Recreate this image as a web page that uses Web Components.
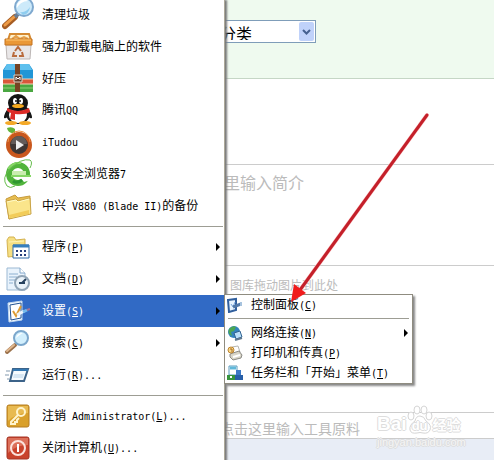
<!DOCTYPE html>
<html lang="zh-CN">
<head>
<meta charset="utf-8">
<title>开始菜单</title>
<style>
  body {
    margin: 0;
    overflow: hidden;
    background: #fff;
    font: 12px "Liberation Sans", "Noto Sans CJK SC", sans-serif;
  }
</style>
</head>
<body>

<desk-top>
  <editor-page></editor-page>

  <start-menu slot="menu">
    <menu-item label="清理垃圾">
      <svg slot="icon" viewBox="0 0 32 32">
        <path d="M13 19L3 28" stroke="#a65d24" stroke-width="6" stroke-linecap="round"/>
        <path d="M12 19L3 27" stroke="#ee9b45" stroke-width="3" stroke-linecap="round"/>
        <path d="M13 19l3-3" stroke="#6b7c91" stroke-width="4"/>
        <circle cx="22" cy="9" r="9" fill="#cdeafa" stroke="#7fa9cf" stroke-width="2"/>
        <path d="M15 10a7 7 0 0 1 11-7c-5 0-9 3-11 7z" fill="#fff"/>
        <path d="M18 14q6 1 10-5-1 7-7 8z" fill="#8fcdef"/>
      </svg>
    </menu-item>
    <menu-item label="强力卸载电脑上的软件">
      <svg slot="icon" viewBox="0 0 32 32">
        <path d="M6 10l2-6h19l2 6z" fill="#fff1cc" stroke="#d58a32" stroke-width="2"/>
        <path d="M10 9l4-3 4 3 4-2 4 2" fill="none" stroke="#e5a04a" stroke-width="2"/>
        <path d="M4 15h25l-1 14H5z" fill="#e9e7e8" stroke="#bcb6b5"/>
        <path d="M3 9h27v6H3z" fill="#ea9837" stroke="#c47320"/>
        <path d="M4 10h25" stroke="#ffc872"/>
        <path d="M13 21l3-4 3 4M20 22l1 4h-4M15 26h-4l1-4" fill="none" stroke="#b96b3d" stroke-width="2"/>
      </svg>
    </menu-item>
    <menu-item label="好压">
      <svg slot="icon" viewBox="0 0 32 32">
        <path d="M5 2h22l4 6v10H1V8z" fill="#2196d6"/>
        <path d="M5 2h22l3 6H2z" fill="#5dc0ee"/>
        <path d="M1 17h30v5H1z" fill="#d9573a"/>
        <path d="M1 22h30v8H1z" fill="#4aa741"/>
        <path d="M1 17h30M1 22h30" stroke="#f5d6b4"/>
        <path d="M1 26h30" stroke="#8ed276"/>
        <path d="M13 2h5v28h-5z" fill="#754323"/>
        <path d="M12 13h8v7h-8z" fill="#5d3b29" stroke="#ddd2c7"/>
        <path d="M14 18v-3l2 2 2-2v3" fill="none" stroke="#fff"/>
      </svg>
    </menu-item>
    <menu-item label="腾讯QQ">
      <svg slot="icon" viewBox="0 0 32 32">
        <path d="M6 15Q2 19 2 24q3 1 5-4zM26 15q4 4 4 9-3 1-5-4z" fill="#161616"/>
        <ellipse cx="16" cy="20" rx="12" ry="10" fill="#191919"/>
        <ellipse cx="16" cy="21" rx="9" ry="8" fill="#fff"/>
        <ellipse cx="16" cy="9" rx="10" ry="9" fill="#141414"/>
        <ellipse cx="13" cy="7" rx="2" ry="3" fill="#fff"/>
        <ellipse cx="19" cy="7" rx="2" ry="3" fill="#fff"/>
        <circle cx="14" cy="7" r="1" fill="#111"/>
        <circle cx="18" cy="7" r="1" fill="#111"/>
        <ellipse cx="16" cy="12" rx="6" ry="2" fill="#f7aa20"/>
        <path d="M5 14q11 6 22 0l1 4q-5 3-15 2v6l-5-1 1-6q-3-1-4-2z" fill="#dd2b27"/>
        <ellipse cx="9" cy="29" rx="6" ry="2" fill="#f4a928"/>
        <ellipse cx="23" cy="29" rx="6" ry="2" fill="#f4a928"/>
      </svg>
    </menu-item>
    <menu-item label="iTudou">
      <svg slot="icon" viewBox="0 0 32 32">
        <path d="M5 2q5-2 8 1v4Q6 8 5 2z" fill="#62b43a"/>
        <circle cx="17" cy="19" r="11" fill="#3d3634" stroke="#c9571d" stroke-width="4"/>
        <path d="M6 16a11 11 0 0 1 22 0" fill="none" stroke="#ef9345" stroke-width="1"/>
        <path d="M9 18a8 8 0 0 1 16 0z" fill="#625b59"/>
        <path d="M14 14l8 5-8 5z" fill="#eee"/>
      </svg>
    </menu-item>
    <menu-item label="360安全浏览器7">
      <svg slot="icon" viewBox="0 0 32 32">
        <circle cx="16" cy="16" r="9" fill="none" stroke="#51b43c" stroke-width="6"/>
        <path d="M10 15h14" stroke="#c9edaf" stroke-width="4"/>
        <path d="M17 18h12v4l-7 2z" fill="#fff"/>
        <path d="M9 18h20M6 11q5-7 13-6" fill="none" stroke="#86d765" stroke-width="2"/>
        <path d="M5 28Q-1 20 8 11 19 0 28 2q3 2 0 8M5 28q3 3 8 0" fill="none" stroke="#67bd4d" stroke-width="1"/>
        <path d="M11 23q4 3 9-1" fill="none" stroke="#2f9831" stroke-width="3"/>
      </svg>
    </menu-item>
    <menu-item label="中兴 V880 (Blade II)的备份">
      <svg slot="icon" viewBox="0 0 32 32">
        <path d="M4 9l9-4 3 3 12-2v15L7 29z" fill="#e7bd50" stroke="#c69b3d"/>
        <path d="M4 11l10-2 2 2 12-3 1 16-22 5z" fill="#fae58b" stroke="#c9a346"/>
        <path d="M5 12l9-2 2 2 11-3" fill="none" stroke="#fffac7"/>
        <path d="M7 25l20-5v4L8 28z" fill="#f2cc59"/>
      </svg>
    </menu-item>

    <menu-line></menu-line>

    <menu-item label="程序(&amp;P)" more>
      <svg slot="icon" viewBox="0 0 32 32">
        <path d="M5 9l2-3h5l2 3 9-1v16l-17 2z" fill="#f6df82" stroke="#d4b251"/>
        <path d="M7 11l15-1" stroke="#fff4b4"/>
        <path d="M11 14h16v13H11z" fill="#fff" stroke="#326aa5"/>
        <path d="M11 15h16" stroke="#377fbd" stroke-width="3"/>
        <path d="M14 20h2m2 0h2m2 0h2M14 24h2m2 0h2m2 0h2" stroke="#283f7b" stroke-width="2"/>
      </svg>
    </menu-item>
    <menu-item label="文档(&amp;D)" more>
      <svg slot="icon" viewBox="0 0 32 32">
        <path d="M5 5h13l5 5v17H5z" fill="#e9f3fc" stroke="#9cb9d3"/>
        <path d="M18 5v5h5" fill="#fff" stroke="#84a8cb"/>
        <path d="M7 11h9M7 14h8M7 17h6M7 20h4" stroke="#8db0d0"/>
        <circle cx="20" cy="20" r="7" fill="#e9f2f9" stroke="#91a5b7" stroke-width="2"/>
        <path d="M20 20l4-4M17 20h6" stroke="#26415e" stroke-width="2"/>
      </svg>
    </menu-item>
    <menu-item label="设置(&amp;S)" more selected>
      <svg slot="icon" viewBox="0 0 32 32">
        <path d="M6 8l14-2v19L7 27z" fill="#f6fbff" stroke="#c0d7ef"/>
        <path d="M8 10l11-2v15L9 25z" fill="#fff" stroke="#215293"/>
        <path d="M11 16l3 5 5-10" fill="none" stroke="#dc9b34" stroke-width="2"/>
        <path d="M15 20l7-4" stroke="#eef4fb" stroke-width="3"/>
        <path d="M21 17l4-2" stroke="#73b9eb" stroke-width="3"/>
        <path d="M25 15l3-1" stroke="#a77595" stroke-width="2"/>
      </svg>
      <sub-menu slot="submenu">
        <menu-item small label="控制面板(&amp;C)">
          <svg slot="icon" viewBox="0 0 16 16">
            <path d="M1 3l8-1v11l-7 2z" fill="#e8f4ff" stroke="#315f9d" stroke-width="2"/>
            <path d="M4 7l2 3 2-5" fill="none" stroke="#7aa9df"/>
            <path d="M6 10l8-3" stroke="#5279a9" stroke-width="3"/>
            <path d="M14 5v4" stroke="#a7c3de" stroke-width="2"/>
          </svg>
        </menu-item>
        <menu-line small></menu-line>
        <menu-item small label="网络连接(&amp;N)" more>
          <svg slot="icon" viewBox="0 0 16 16">
            <circle cx="7" cy="7" r="6" fill="#3284bd"/>
            <path d="M2 4q4-4 7-2l-2 4-3 1 1 4Q0 9 2 4z" fill="#4ba653"/>
            <path d="M7 8l6-2 2 6-6 2z" fill="#b9dff8" stroke="#306291"/>
            <path d="M8 15l7-2" stroke="#5e7890" stroke-width="2"/>
          </svg>
        </menu-item>
        <menu-item small label="打印机和传真(&amp;P)">
          <svg slot="icon" viewBox="0 0 16 16">
            <path d="M5 2l6-1 2 6-6 2z" fill="#fff" stroke="#b5b5b1"/>
            <path d="M3 9l9-3 3 4-1 3-8 2-3-3z" fill="#d8d5c7" stroke="#8b8a85"/>
            <path d="M6 12l7-2" stroke="#fff" stroke-width="2"/>
            <circle cx="4" cy="5" r="3" fill="#f7d889" stroke="#bf852f"/>
            <path d="M3 4h2v3" fill="none" stroke="#a66a22"/>
          </svg>
        </menu-item>
        <menu-item small label="任务栏和「开始」菜单(&amp;T)">
          <svg slot="icon" viewBox="0 0 16 16">
            <path d="M2 1h8v9H2z" fill="#fff" stroke="#5a9cbd"/>
            <path d="M3 3h6" stroke="#60b8da" stroke-width="3"/>
            <path d="M9 5h5v6H9z" fill="#3d78c6"/>
            <path d="M0 10h8v5H0z" fill="#37943c"/>
            <path d="M8 10h8v5H8z" fill="#285fa8"/>
            <path d="M3 12h2" stroke="#fff" stroke-width="2"/>
          </svg>
        </menu-item>
      </sub-menu>
    </menu-item>
    <menu-item label="搜索(&amp;C)" more>
      <svg slot="icon" viewBox="0 0 32 32">
        <path d="M13 18l-8 7" stroke="#9b714b" stroke-width="4" stroke-linecap="round"/>
        <path d="M12 18l-7 6" stroke="#dfb78e" stroke-width="2" stroke-linecap="round"/>
        <circle cx="19" cy="11" r="7" fill="#d2effd" stroke="#7ba7cc" stroke-width="2"/>
        <path d="M14 11q1-5 7-5-4 2-7 5z" fill="#fff"/>
      </svg>
    </menu-item>
    <menu-item label="运行(&amp;R)...">
      <svg slot="icon" viewBox="0 0 32 32">
        <path d="M11 10h15l-4 12H8z" fill="#f5fafe" stroke="#3c6389" stroke-width="2"/>
        <path d="M11 11h15" stroke="#3478b2" stroke-width="2"/>
        <path d="M12 15h10l-1 4H11z" fill="#d6e6f3"/>
        <path d="M4 12h4M3 16h4M5 20h2" stroke="#8198ad"/>
      </svg>
    </menu-item>

    <menu-line></menu-line>

    <menu-item label="注销 Administrator(&amp;L)...">
      <svg slot="icon" viewBox="0 0 32 32">
        <rect x="5" y="5" width="22" height="22" rx="2" fill="#d9a02b" stroke="#b57c20"/>
        <path d="M6 6h20v7Q14 13 6 21z" fill="#e8ba51"/>
        <circle cx="19" cy="12" r="4" fill="none" stroke="#fff4cd" stroke-width="2"/>
        <path d="M16 15l-7 7v2h4v-2h2v-2l2-2" fill="none" stroke="#fff4cd" stroke-width="2"/>
      </svg>
    </menu-item>
    <menu-item label="关闭计算机(&amp;U)...">
      <svg slot="icon" viewBox="0 0 32 32">
        <rect x="5" y="5" width="22" height="22" rx="2" fill="#c9432d" stroke="#a43524"/>
        <path d="M6 6h20v7Q14 13 6 21z" fill="#dc705a"/>
        <circle cx="16" cy="16" r="7" fill="none" stroke="#fbe2dc" stroke-width="2"/>
        <path d="M16 12v8" stroke="#fff" stroke-width="2"/>
      </svg>
    </menu-item>
  </start-menu>

  <red-arrow slot="menu"></red-arrow>
</desk-top>

<script>
class DeskTop extends HTMLElement {
  constructor() {
    super();
    this.attachShadow({ mode: 'open' });
    this.shadowRoot.innerHTML = `
      <style>
        :host {
          display: block;
          position: relative;
          height: 100vh;
          overflow: hidden;
        }
      </style>
      <slot></slot>
      <slot name="menu"></slot>
    `;
  }
}

// The web page behind the menu
class EditorPage extends HTMLElement {
  constructor() {
    super();
    this.attachShadow({ mode: 'open' });
    this.shadowRoot.innerHTML = `
      <style>
        :host {
          display: flex;
          flex-direction: column;
          min-height: 100vh;
          color: #bbb;
        }
        section {
          box-sizing: border-box;
          padding-left: 224px;
          border-bottom: 1px solid #ccc;
        }
        .category {
          height: 79px;
          padding: 20px 0 0 210px;
          background: #effaef;
          border-color: #c5d6c5;
        }
        .blank {
          height: 86px;
        }
        .intro {
          height: 101px;
          padding-top: 5px;
        }
        .pictures {
          height: 147px;
          padding: 12px 0 0 230px;
          line-height: 16px;
        }
        .tools {
          height: 26px;
          padding-left: 220px;
        }
        footer {
          flex: 1;
          background: #e8edf6;
        }
        input {
          display: block;
          box-sizing: border-box;
          width: 100%;
          height: 24px;
          padding: 0;
          border: 0;
          background: none;
          font: 16px "Noto Sans CJK SC", sans-serif;
        }
        .tools input {
          height: 25px;
          padding-top: 4px;
          font-size: 14px;
        }
        input::placeholder {
          color: #bbb;
        }
        .pick {
          display: grid;
          width: 106px;
          height: 23px;
        }
        .pick > * {
          grid-area: 1 / 1;
        }
        select {
          appearance: none;
          box-sizing: border-box;
          width: 100%;
          height: 23px;
          padding: 0 0 2px 9px;
          border: 1px solid #7f9db9;
          border-radius: 0;
          background: #fff;
          color: #000;
          font: 16px "Noto Sans CJK SC", sans-serif;
        }
        .pick svg {
          width: 15px;
          height: 19px;
          justify-self: end;
          align-self: center;
          margin-right: 2px;
          pointer-events: none;
        }
      </style>
      <section class="category">
        <div class="pick">
          <select aria-label="分类"><option>分类</option></select>
          <svg viewBox="0 0 15 19">
            <rect width="15" height="19" rx="2" fill="#c0d2fa"/>
            <path d="M4 8l3.500 3.500L11 8" fill="none" stroke="#45608f" stroke-width="2"/>
          </svg>
        </div>
      </section>
      <section class="blank"></section>
      <section class="intro"><input aria-label="简介" placeholder="里输入简介"></section>
      <section class="pictures">图库拖动图片到此处</section>
      <section class="tools"><input aria-label="工具原料" placeholder="点击这里输入工具原料"></section>
      <footer></footer>
      <baidu-mark></baidu-mark>
    `;
  }
}

class BaiduMark extends HTMLElement {
  constructor() {
    super();
    this.attachShadow({ mode: 'open' });
    this.shadowRoot.innerHTML = `
      <style>
        :host {
          position: absolute;
          left: 377px;
          top: 405px;
          color: #fff;
          text-shadow: 1px 0 #ddd, -1px 0 #ddd, 0 1px #ddd, 0 -1px #ddd;
        }
        .name {
          display: flex;
          align-items: flex-end;
          height: 30px;
          font: bold 19px/22px "Liberation Sans", sans-serif;
        }
        .paw {
          display: grid;
          width: 26px;
          height: 30px;
        }
        .paw > * {
          grid-area: 1 / 1;
        }
        .paw span {
          align-self: end;
          justify-self: center;
          font-size: 13px;
          line-height: 18px;
        }
        .cn {
          font: bold 14px/22px "Noto Sans CJK SC", sans-serif;
        }
        .site {
          font: 11px/14px "Liberation Sans", sans-serif;
          color: #f5f5f5;
        }
      </style>
      <div class="name">
        <span>Bai</span>
        <div class="paw">
          <svg width="26" height="30" viewBox="0 0 26 30" fill="#fff" stroke="#d5d5d5">
            <ellipse cx="4" cy="11" rx="3" ry="4"/>
            <ellipse cx="10" cy="5" rx="3" ry="4"/>
            <ellipse cx="17" cy="5" rx="3" ry="4"/>
            <ellipse cx="22" cy="11" rx="3" ry="4"/>
            <path d="M13 11q4 0 6 5 6 4 4 9-2 4-7 3-3-1-6 0-6 1-7-3-1-5 5-9 1-5 5-5z"/>
          </svg>
          <span>du</span>
        </div>
        <span class="cn">经验</span>
      </div>
      <div class="site">jingyan.baidu.com</div>
    `;
  }
}

class StartMenu extends HTMLElement {
  constructor() {
    super();
    this.attachShadow({ mode: 'open' });
    this.shadowRoot.innerHTML = `
      <style>
        :host {
          position: absolute;
          left: 0;
          top: -2px;
          width: 224px;
          background: #fff;
          border-right: 1px solid #aca899;
          box-shadow: 2px 2px 2px #777;
        }
      </style>
      <slot></slot>
    `;
  }
}

class SubMenu extends HTMLElement {
  constructor() {
    super();
    this.attachShadow({ mode: 'open' });
    this.shadowRoot.innerHTML = `
      <style>
        :host {
          display: block;
          box-sizing: border-box;
          width: 189px;
          background: #fff;
          border: 1px solid #8f8c80;
          box-shadow: 2px 2px 2px #888;
          color: #000;
        }
      </style>
      <slot></slot>
    `;
  }
}

class MenuLine extends HTMLElement {
  constructor() {
    super();
    this.attachShadow({ mode: 'open' });
    this.shadowRoot.innerHTML = `
      <style>
        :host {
          display: block;
          padding: 4px 1px 4px 3px;
        }
        :host([small]) {
          padding: 3px 3px 4px;
        }
        hr {
          height: 1px;
          margin: 0;
          border: 0;
          background: #9d9d94;
        }
      </style>
      <hr>
    `;
  }
}

class MenuItem extends HTMLElement {
  constructor() {
    super();
    this.attachShadow({ mode: 'open' });
    this.shadowRoot.innerHTML = `
      <style>
        :host {
          display: block;
          position: relative;
        }
        button {
          display: flex;
          align-items: center;
          box-sizing: border-box;
          width: 100%;
          height: 32px;
          padding: 0 4px 0 2px;
          border: 0;
          background: none;
          color: #000;
          font: 12px/16px "Noto Sans CJK SC", sans-serif;
          text-align: left;
          white-space: pre;
        }
        :host([small]) button {
          height: 20px;
        }
        :host([selected]) > button,
        :host([selected]) button {
          background: #316ac5;
          color: #fff;
        }
        ::slotted(svg) {
          flex: none;
          width: 32px;
          height: 32px;
          margin-right: 8px;
          fill: none;
        }
        :host([small]) ::slotted(svg) {
          width: 16px;
          height: 16px;
        }
        .label {
          flex: 1;
        }
        .latin {
          font-family: "DejaVu Sans Mono", monospace;
          font-size: 10px;
        }
        .more {
          display: none;
          width: 4px;
          height: 8px;
          fill: #000;
        }
        :host([more]) .more {
          display: block;
        }
        ::slotted(sub-menu) {
          position: absolute;
          left: 100%;
          top: -1px;
        }
      </style>
      <button type="button">
        <slot name="icon"></slot>
        <span class="label"></span>
        <svg class="more" viewBox="0 0 4 8"><path d="M0 0l4 4-4 4z"/></svg>
      </button>
      <slot name="submenu"></slot>
    `;
    // white-space: pre would keep the line breaks between the button's children
    const button = this.shadowRoot.querySelector('button');
    button.replaceChildren(...button.children);
  }

  connectedCallback() {
    // "&X" marks the shortcut letter
    this.shadowRoot.querySelector('.label').innerHTML = this.getAttribute('label')
      .replace(/[\x20-\x7e]+/g, '<span class="latin">$&</span>')
      .replace(/&(\w)/g, '<u>$1</u>');
  }
}

class RedArrow extends HTMLElement {
  constructor() {
    super();
    this.attachShadow({ mode: 'open' });
    this.shadowRoot.innerHTML = `
      <style>
        :host {
          position: absolute;
          left: 290px;
          top: 112px;
          pointer-events: none;
        }
        svg {
          display: block;
        }
      </style>
      <svg width="140" height="192" viewBox="0 0 140 192">
        <path d="M137 3L10 178" stroke="#fbc4c4" stroke-width="4" stroke-linecap="round"/>
        <path d="M137 3L10 178" stroke="#c4202a" stroke-width="3" stroke-linecap="round"/>
        <path d="M1 190L4 172l12 9z" fill="#f01c1c"/>
      </svg>
    `;
  }
}

customElements.define('desk-top', DeskTop);
customElements.define('baidu-mark', BaiduMark);
customElements.define('editor-page', EditorPage);
customElements.define('start-menu', StartMenu);
customElements.define('sub-menu', SubMenu);
customElements.define('menu-line', MenuLine);
customElements.define('menu-item', MenuItem);
customElements.define('red-arrow', RedArrow);
</script>
</body>
</html>
